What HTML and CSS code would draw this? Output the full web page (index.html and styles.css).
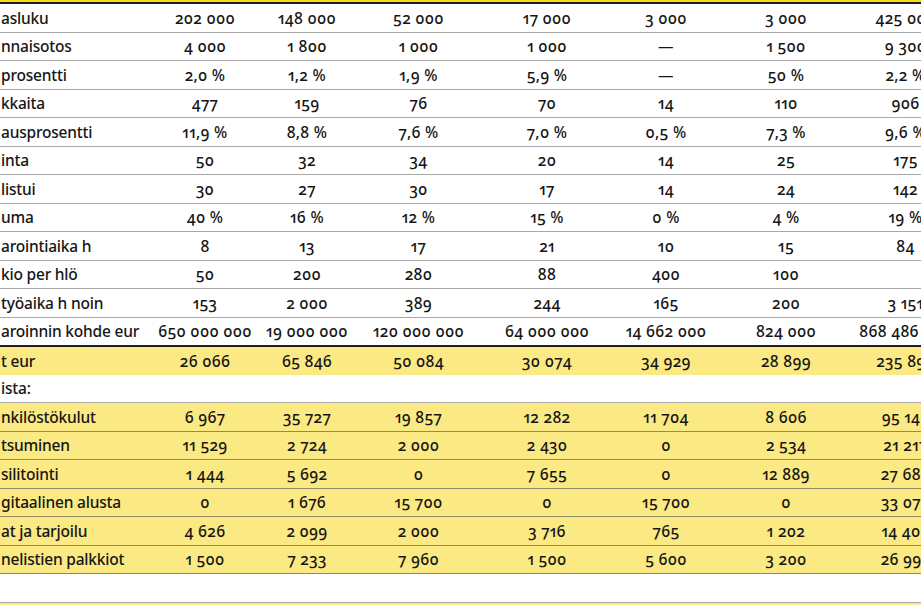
FILE: index.html
```html
<!DOCTYPE html>
<html lang="fi">
<head>
<meta charset="utf-8">
<title>Taulukko</title>
<link rel="stylesheet" href="styles.css">
</head>
<body>
<div class="topbar"></div>
<table class="data">
<colgroup>
<col class="c-label"><col class="c1"><col class="c2"><col class="c3"><col class="c4"><col class="c5"><col class="c6"><col class="c7">
</colgroup>
<tbody>
<tr><td class="label">asluku</td><td>202 000</td><td>148 000</td><td>52 000</td><td>17 000</td><td>3 000</td><td>3 000</td><td>425 000</td></tr>
<tr><td class="label">nnaisotos</td><td>4 000</td><td>1 800</td><td>1 000</td><td>1 000</td><td>—</td><td>1 500</td><td>9 300</td></tr>
<tr><td class="label">prosentti</td><td>2,0 %</td><td>1,2 %</td><td>1,9 %</td><td>5,9 %</td><td>—</td><td>50 %</td><td>2,2 %</td></tr>
<tr><td class="label">kkaita</td><td>477</td><td>159</td><td>76</td><td>70</td><td>14</td><td>110</td><td>906</td></tr>
<tr><td class="label">ausprosentti</td><td>11,9 %</td><td>8,8 %</td><td>7,6 %</td><td>7,0 %</td><td>0,5 %</td><td>7,3 %</td><td>9,6 %</td></tr>
<tr><td class="label">inta</td><td>50</td><td>32</td><td>34</td><td>20</td><td>14</td><td>25</td><td>175</td></tr>
<tr><td class="label">listui</td><td>30</td><td>27</td><td>30</td><td>17</td><td>14</td><td>24</td><td>142</td></tr>
<tr><td class="label">uma</td><td>40 %</td><td>16 %</td><td>12 %</td><td>15 %</td><td>0 %</td><td>4 %</td><td>19 %</td></tr>
<tr><td class="label">arointiaika h</td><td>8</td><td>13</td><td>17</td><td>21</td><td>10</td><td>15</td><td>84</td></tr>
<tr><td class="label">kio per hlö</td><td>50</td><td>200</td><td>280</td><td>88</td><td>400</td><td>100</td><td></td></tr>
<tr><td class="label">työaika h noin</td><td>153</td><td>2 000</td><td>389</td><td>244</td><td>165</td><td>200</td><td>3 151</td></tr>
<tr class="end"><td class="label">aroinnin kohde eur</td><td>650 000 000</td><td>19 000 000</td><td>120 000 000</td><td>64 000 000</td><td>14 662 000</td><td>824 000</td><td>868 486 000</td></tr>
<tr class="total"><td class="label">t eur</td><td>26 066</td><td>65 846</td><td>50 084</td><td>30 074</td><td>34 929</td><td>28 899</td><td>235 899</td></tr>
<tr class="section"><td class="label">ista:</td><td></td><td></td><td></td><td></td><td></td><td></td><td></td></tr>
<tr class="sub"><td class="label">nkilöstökulut</td><td>6 967</td><td>35 727</td><td>19 857</td><td>12 282</td><td>11 704</td><td>8 606</td><td>95 145</td></tr>
<tr class="sub"><td class="label">tsuminen</td><td>11 529</td><td>2 724</td><td>2 000</td><td>2 430</td><td>0</td><td>2 534</td><td>21 217</td></tr>
<tr class="sub"><td class="label">silitointi</td><td>1 444</td><td>5 692</td><td>0</td><td>7 655</td><td>0</td><td>12 889</td><td>27 680</td></tr>
<tr class="sub"><td class="label">gitaalinen alusta</td><td>0</td><td>1 676</td><td>15 700</td><td>0</td><td>15 700</td><td>0</td><td>33 076</td></tr>
<tr class="sub"><td class="label">at ja tarjoilu</td><td>4 626</td><td>2 099</td><td>2 000</td><td>3 716</td><td>765</td><td>1 202</td><td>14 408</td></tr>
<tr class="sub"><td class="label">nelistien palkkiot</td><td>1 500</td><td>7 233</td><td>7 960</td><td>1 500</td><td>5 600</td><td>3 200</td><td>26 993</td></tr>
<tr class="blank"><td class="label"></td><td></td><td></td><td></td><td></td><td></td><td></td><td></td></tr>
<tr class="sub"><td class="label"></td><td></td><td></td><td></td><td></td><td></td><td></td><td></td></tr>
</tbody>
</table>
</body>
</html>
```
FILE: styles.css
```css
html, body {
  margin: 0;
  padding: 0;
  background: #ffffff;
  overflow: hidden;
}
body {
  font-family: "Noto Sans", "Open Sans", sans-serif;
  color: #161616;
}
.topbar {
  height: 2px;
  background: #f6da1c;
}
.data {
  border-collapse: collapse;
  table-layout: fixed;
  width: 958px;
  border-top: 2px solid #1f1f1f;
  font-size: 15.5px;
  font-weight: 500;
  font-variant-numeric: oldstyle-nums proportional-nums;
  letter-spacing: 0.3px;
}
.c-label { width: 152px; }
.c1 { width: 106px; }
.c2 { width: 98px; }
.c3 { width: 125px; }
.c4 { width: 132px; }
.c5 { width: 106px; }
.c6 { width: 134px; }
.c7 { width: 105px; }
.data td {
  height: 26.5px;
  padding: 1px 4px 0;
  text-align: center;
  white-space: nowrap;
  line-height: 1;
  border-bottom: 1px solid #a8a8a8;
  overflow: hidden;
}
.data td.label {
  text-align: left;
  padding-left: 1px;
  letter-spacing: -0.2px;
}
.data tr.end td {
  border-bottom: 2px solid #1f1f1f;
}
.data tr.total td {
  background: #fbe983;
  border-bottom: 0;
}
.data tr.section td {
  border-bottom: 1px solid #a8a8a8;
}
.data tr.sub td {
  background: #fbe983;
  border-bottom: 1px solid #8e8a66;
}
.data tr.blank td {
  border-bottom: 1px solid #a8a8a8;
}
```
